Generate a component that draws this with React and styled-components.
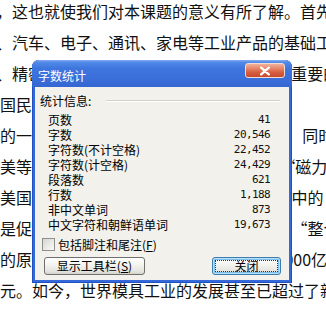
import React from "react";
import styled, { createGlobalStyle, css } from "styled-components";

const Global = createGlobalStyle`
  html, body { margin: 0; padding: 0; background: #fff; }
  body { font-family: "Noto Sans CJK SC", sans-serif; }
`;

const Page = styled.div`
  position: relative;
  width: 326px;
  height: 309px;
  overflow: hidden;
  background: #ffffff;
`;

const Doc = styled.div`
  display: flex;
  flex-direction: column;
  margin-top: -4px;
  font-family: "Noto Sans CJK SC", sans-serif;
  font-size: 16px;
  line-height: 31px;
  color: #111;
`;

const Line = styled.div`
  white-space: pre;
  text-indent: ${(p) => p.$indent || 0}px;
`;

const Quote = styled.span`
  font-feature-settings: "fwid" 1;
`;

const Dialog = styled.div`
  position: absolute;
  left: 32px;
  top: 60px;
  width: 260px;
  height: 223px;
  display: flex;
  flex-direction: column;
  border-radius: 7px 7px 0 0;
  overflow: hidden;
  background: #3568d8;
  box-shadow: inset 0 0 0 1px #2150bf;
  font-family: "Noto Sans CJK SC", sans-serif;
  font-size: 12px;
  color: #000;
`;

const TitleBar = styled.div`
  height: 27px;
  flex: none;
  display: flex;
  align-items: flex-start;
  padding: 0 7px 0 6px;
  background: linear-gradient(
    180deg,
    #86acf3 0%,
    #5189e8 9%,
    #3f76de 30%,
    #3a6ed9 70%,
    #3566d2 100%
  );
`;

const Title = styled.span`
  padding-top: 9px;
  line-height: 14px;
  color: #ffffff;
  font-size: 12px;
`;

const CloseButton = styled.div`
  margin-left: auto;
  margin-top: 3px;
  width: 40px;
  height: 15px;
  box-sizing: border-box;
  border: 1px solid #f3dcd4;
  border-radius: 3px;
  background: linear-gradient(
    180deg,
    #f0b29c 0%,
    #e68468 35%,
    #d65d3f 65%,
    #c54a2e 100%
  );
  display: flex;
  align-items: center;
  justify-content: center;
`;

const Client = styled.div`
  flex: 1;
  margin: 0 3px 3px;
  background: #f2f1eb;
  display: flex;
  flex-direction: column;
  padding-top: 6px;
`;

const Header = styled.div`
  display: flex;
  align-items: center;
  height: 15px;
  line-height: 15px;
  padding: 0 9px 0 5px;
`;

const Rule = styled.div`
  flex: 1;
  margin-left: 15px;
  border-top: 1px solid #d3d2c6;
  border-bottom: 1px solid #ffffff;
`;

const Stats = styled.div`
  display: flex;
  flex-direction: column;
  margin-top: 4px;
  padding: 0 19px 0 13px;
`;

const StatRow = styled.div`
  display: flex;
  justify-content: space-between;
  align-items: center;
  height: 15px;
  line-height: 15px;
`;

const Value = styled.span`
  font-family: "DejaVu Sans Mono", monospace;
  font-size: 11px;
  letter-spacing: -0.6px;
  color: #111;
`;

const CheckRow = styled.label`
  display: flex;
  align-items: center;
  gap: 3px;
  margin-top: 6px;
  padding-left: 7px;
  height: 13px;
  line-height: 13px;
`;

const CheckBox = styled.span`
  width: 13px;
  height: 13px;
  box-sizing: border-box;
  border: 1px solid #8d8e8e;
  background: linear-gradient(135deg, #d6d6d0 0%, #ecece8 60%, #fbfbfa 100%);
`;

const Buttons = styled.div`
  display: flex;
  justify-content: space-between;
  margin-top: 6px;
  padding: 0 8px 0 9px;
`;

const Button = styled.button`
  position: relative;
  width: ${(p) => p.$w}px;
  height: 18px;
  box-sizing: border-box;
  padding: 0;
  font-family: "Noto Sans CJK SC", sans-serif;
  font-size: 12px;
  line-height: 16px;
  color: #000;
  border: 1px solid #707070;
  border-radius: 3px;
  background: linear-gradient(
    180deg,
    #ffffff 0%,
    #f4f4f1 40%,
    #e6e5df 80%,
    #d4d3cb 100%
  );
  ${(p) =>
    p.$default &&
    css`
      border-color: #3f7cae;
      box-shadow: inset 0 0 0 1px #b6e0fa, inset 0 0 0 2px #7cc0ec;
      &::after {
        content: "";
        position: absolute;
        inset: 2px;
        border: 1px dotted #333;
      }
    `}
`;

const stats = [
  ["页数", "41"],
  ["字数", "20,546"],
  ["字符数(不计空格)", "22,452"],
  ["字符数(计空格)", "24,429"],
  ["段落数", "621"],
  ["行数", "1,188"],
  ["非中文单词", "873"],
  ["中文字符和朝鲜语单词", "19,673"],
];

export default function App() {
  return (
    <Page>
      <Global />
      <Doc>
        <Line $indent={-4}>，这也就使我们对本课题的意义有所了解。首先，</Line>
        <Line $indent={-4}>、汽车、电子、通讯、家电等工业产品的基础工艺装备</Line>
        <Line $indent={-4}>、精密仪器、航空航天等领域都具有十分  重要的作用</Line>
        <Line>国民经济的发展具有十分重要的意义。</Line>
        <Line>的一个重要标志，模具工业发展很迅速。    同时，在</Line>
        <Line>
          美等国家的模具工业十分发达，被称为  <Quote>“</Quote>磁力工业<Quote>”</Quote>。
        </Line>
        <Line>
          美国等工业发达国家，模具工业在制造业 中的<Quote>“</Quote>龙头<Quote>”</Quote>地位
        </Line>
        <Line>
          是促进国民经济发展的重要产业，被誉为 <Quote>“</Quote>整个工业的基础<Quote>”</Quote>。
        </Line>
        <Line>的原因之一。目前全世界模具年产值达 5000亿美元，</Line>
        <Line>元。如今，世界模具工业的发展甚至已超过了新兴的</Line>
      </Doc>

      <Dialog>
        <TitleBar>
          <Title>字数统计</Title>
          <CloseButton>
            <svg width="12" height="10" viewBox="0 0 12 10">
              <path
                d="M2.2 1.6 L9.8 8.4 M9.8 1.6 L2.2 8.4"
                stroke="#ffffff"
                strokeWidth="2.3"
                strokeLinecap="round"
                fill="none"
              />
            </svg>
          </CloseButton>
        </TitleBar>
        <Client>
          <Header>
            <span>统计信息:</span>
            <Rule />
          </Header>
          <Stats>
            {stats.map(([label, value]) => (
              <StatRow key={label}>
                <span>{label}</span>
                <Value>{value}</Value>
              </StatRow>
            ))}
          </Stats>
          <CheckRow>
            <CheckBox />
            <span>
              包括脚注和尾注(<u>F</u>)
            </span>
          </CheckRow>
          <Buttons>
            <Button $w={101}>
              显示工具栏(<u>S</u>)
            </Button>
            <Button $w={69} $default>
              关闭
            </Button>
          </Buttons>
        </Client>
      </Dialog>
    </Page>
  );
}
